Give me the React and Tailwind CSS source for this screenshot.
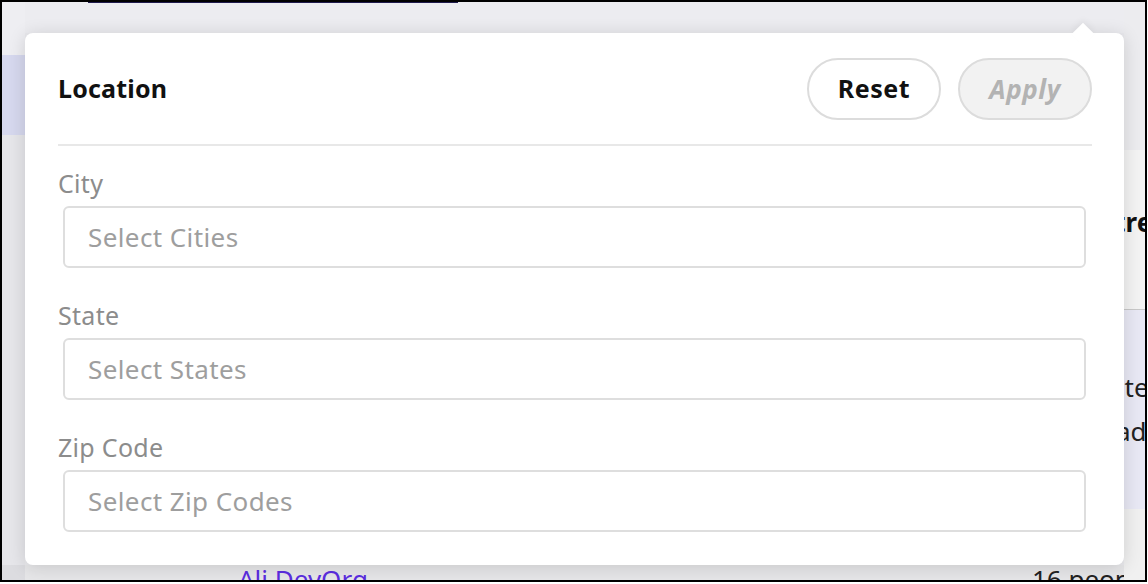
import { useState } from 'react';

const font = { fontFamily: '"Noto Sans", "Open Sans", sans-serif' };

function Field({ label, placeholder }) {
  const [value, setValue] = useState('');
  return (
    <div className="flex flex-col">
      <label className="text-[25px] leading-[30px] tracking-[0.3px] text-[#8c8c8c]">{label}</label>
      <input
        value={value}
        onChange={e => setValue(e.target.value)}
        placeholder={placeholder}
        className="mt-2 ml-[5px] mr-[6px] h-[62px] rounded-md border-2 border-[#dedede] bg-white pl-[23px] text-[26px] tracking-[0.4px] text-[#333] placeholder:text-[#9e9e9e] outline-none"
      />
    </div>
  );
}

export default function App() {
  return (
    <div className="w-[1148px] h-[584px] bg-white" style={font}>
      <div className="relative w-[1147px] h-[582px] border-2 border-black overflow-hidden flex">
        {/* page behind the popover */}
        <div className="w-[23px] shrink-0 flex flex-col">
          <div className="h-[53px] bg-[#eeeef2]" />
          <div className="h-[80px] bg-[#d6d8ee]" />
          <div className="flex-1 bg-[#e6e6ea]" />
          <div className="h-[15px] bg-[#dcdce0]" />
        </div>
        <div className="w-[1099px] shrink-0 flex flex-col">
          <div className="h-[31px] bg-[#ececf0]">
            <div className="ml-[63px] w-[370px] h-[1px] bg-[#1f1b4d]" />
          </div>
          <div className="flex-1 bg-[#e9e9ed]" />
          <div className="h-[15px] bg-[#e6e6e8]">
            <div className="flex text-[26px] leading-[30px] whitespace-nowrap -mt-[1px]">
              <span className="ml-[213px] text-[#5b2de0]">Ali DevOrg</span>
              <span className="ml-[664px] text-[#222]">16 people</span>
            </div>
          </div>
        </div>
        <div className="flex-1 min-w-0 flex flex-col">
          <div className="h-[148px] bg-[#ececef]" />
          <div className="h-[160px] bg-[#f3f3f3] border-b border-[#c8c8c8] pt-[57px]">
            <div className="-ml-[24px] whitespace-nowrap text-[26px] leading-[30px] font-bold text-[#111]">Street</div>
          </div>
          <div className="h-[199px] bg-[#e8e8f4] pt-[62px]">
            <div className="-ml-[14px] whitespace-nowrap text-[26px] leading-[30px] text-[#222]">ate</div>
            <div className="mt-[14px] -ml-[8px] whitespace-nowrap text-[26px] leading-[30px] text-[#222]">ad</div>
          </div>
          <div className="flex-1 bg-[#f0f0f0]" />
        </div>

        {/* popover */}
        <div className="absolute left-[23px] top-[31px] w-[1099px] h-[532px] rounded-lg bg-white shadow-[0_2px_18px_rgba(0,0,0,0.14)] pt-[25px] pl-[33px] pr-[32px]">
          <div className="absolute -top-[7px] left-[1050px] w-[16px] h-[16px] rotate-45 bg-white shadow-[-3px_-3px_6px_rgba(0,0,0,0.04)]" />
          <div className="relative flex items-center justify-between">
            <h2 className="text-[25px] tracking-[0.2px] font-bold text-[#111]">Location</h2>
            <div className="flex gap-[17px]">
              <button className="w-[134px] h-[62px] rounded-full border-2 border-[#dcdcdc] bg-white text-[25px] tracking-[0.6px] font-bold text-[#111]">
                Reset
              </button>
              <button disabled className="w-[134px] h-[62px] rounded-full border-2 border-[#dcdcdc] bg-[#f2f2f2] text-[26px] tracking-[0.6px] font-bold italic text-[#b3b3b3]">
                Apply
              </button>
            </div>
          </div>
          <div className="mt-[24px] h-[2px] bg-[#e8e8e8]" />
          <div className="mt-[22px] flex flex-col gap-[32px]">
            <Field label="City" placeholder="Select Cities" />
            <Field label="State" placeholder="Select States" />
            <Field label="Zip Code" placeholder="Select Zip Codes" />
          </div>
        </div>
      </div>
    </div>
  );
}
